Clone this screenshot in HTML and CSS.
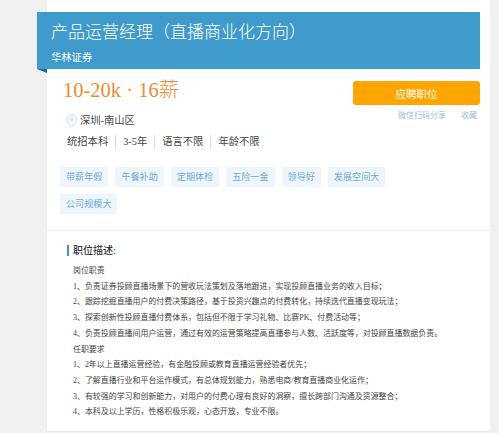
FILE: index.html
```html
<!DOCTYPE html>
<html lang="zh-CN">
<head>
<meta charset="utf-8">
<title>产品运营经理</title>
<link rel="stylesheet" href="styles.css">
</head>
<body>
<main class="card">
  <header class="banner">
    <h1 class="title">产品运营经理（直播商业化方向）</h1>
    <p class="company">华林证券</p>
    <span class="fold"></span>
  </header>
  <section class="summary">
    <div class="top">
      <div class="info">
        <div class="salary">10-20k · 16薪</div>
        <div class="location">
          <svg class="pin" viewBox="0 0 12 15" width="11" height="14"><path d="M6 .8C3 .8.8 3 .8 5.800c0 3.400 3.600 6.600 5.200 8.400 1.600-1.800 5.200-5 5.200-8.400C11.200 3 9 .8 6 .8z" fill="none" stroke="#b5d8ee" stroke-width="1"/><circle cx="6" cy="5.600" r="1.800" fill="none" stroke="#b5d8ee" stroke-width="1"/></svg>
          <span>深圳-南山区</span>
        </div>
        <ul class="specs">
          <li>统招本科</li>
          <li>3-5年</li>
          <li>语言不限</li>
          <li>年龄不限</li>
        </ul>
      </div>
      <div class="actions">
        <button class="apply">应聘职位</button>
        <div class="links"><span>微信扫码分享</span><span>收藏</span></div>
      </div>
    </div>
    <ul class="tags">
      <li>带薪年假</li>
      <li>午餐补助</li>
      <li>定期体检</li>
      <li>五险一金</li>
      <li>领导好</li>
      <li>发展空间大</li>
      <li>公司规模大</li>
    </ul>
  </section>
  <section class="desc">
    <h2 class="desc-head">职位描述:</h2>
    <div class="desc-body">
      <p>岗位职责</p>
      <p>1、负责证券投顾直播场景下的营收玩法策划及落地跟进，实现投顾直播业务的收入目标；</p>
      <p>2、跟踪挖掘直播用户的付费决策路径，基于投资兴趣点的付费转化，持续迭代直播变现玩法；</p>
      <p>3、探索创新性投顾直播付费体系，包括但不限于学习礼物、比赛PK、付费活动等；</p>
      <p>4、负责投顾直播间用户运营，通过有效的运营策略提高直播参与人数、活跃度等，对投顾直播数据负责。</p>
      <p>任职要求</p>
      <p>1、2年以上直播运营经验，有金融投顾或教育直播运营经验者优先；</p>
      <p>2、了解直播行业和平台运作模式，有总体规划能力，熟悉电商/教育直播商业化运作；</p>
      <p>3、有较强的学习和创新能力，对用户的付费心理有良好的洞察，擅长跨部门沟通及资源整合；</p>
      <p>4、本科及以上学历，性格积极乐观，心态开放，专业不限。</p>
    </div>
  </section>
</main>
</body>
</html>
```
FILE: styles.css
```css
* { box-sizing: border-box; }
html, body { margin: 0; padding: 0; height: 100%; }
body {
  background: #f0f0f0;
  font-family: "Liberation Serif", "Noto Sans CJK SC", serif;
  color: #444;
  overflow: hidden;
}
ul { list-style: none; margin: 0; padding: 0; }
p, h1, h2 { margin: 0; font-weight: 400; }
.card {
  width: 443px;
  height: 432px;
  margin-left: 47px;
  padding-top: 12px;
  background: #fff;
  border-bottom: 1px solid #e9e9e9;
}
.banner {
  position: relative;
  width: 443px;
  height: 57px;
  margin-left: -10px;
  padding: 8px 14px 0;
  background: #3f9bcc;
  color: #fff;
}
.title { font-size: 17px; line-height: 26px; font-weight: 300; }
.company { margin-top: 5px; font-size: 10.3px; line-height: 14px; }
.fold {
  position: absolute;
  left: 0;
  top: 57px;
  border-top: 4px solid #1d6a96;
  border-left: 10px solid transparent;
}
.summary { padding: 0 10px 0 13px; height: 162px; border-bottom: 1px solid #eaeaea; }
.top { display: flex; justify-content: space-between; }
.info { padding-left: 7px; }
.salary { margin-top: 6px; margin-left: -4px; font-size: 20.5px; line-height: 30px; color: #f08c2e; font-weight: 300; }
.location { display: flex; align-items: center; gap: 3px; margin-top: 8px; font-size: 10.3px; line-height: 15px; color: #444; }
.pin { display: block; margin-left: -1px; }
.specs { display: flex; margin-top: 7px; font-size: 10.3px; line-height: 14px; color: #444; }
.specs li { padding-right: 7px; margin-right: 7px; border-right: 1px solid #ddd; }
.specs li:last-child { border: 0; margin: 0; padding: 0; }
.actions { width: 127px; margin-top: 12px; }
.apply {
  display: block;
  width: 127px;
  height: 24px;
  border: 0;
  padding: 0;
  border-radius: 3px;
  background: #ffa500;
  color: #fff;
  font-family: inherit;
  font-size: 10.5px;
}
.links { display: flex; justify-content: flex-end; gap: 15px; margin-top: 5px; padding-right: 3px; font-size: 8px; line-height: 12px; color: #9fbcd6; }
.tags { display: flex; flex-wrap: wrap; gap: 7px; width: 370px; margin-top: 18px; }
.tags li { height: 20px; padding: 0 6px; background: #eef6fc; color: #6fa9d0; font-size: 9.1px; line-height: 20px; }
.desc { padding: 14px 0 0 20px; }
.desc-head { padding-left: 4px; border-left: 2px solid #3d9aca; font-size: 10px; line-height: 11px; color: #333; font-weight: 500; }
.desc-body { margin-top: 7px; padding-left: 6px; font-size: 7.95px; line-height: 15.700px; color: #444; }
```
